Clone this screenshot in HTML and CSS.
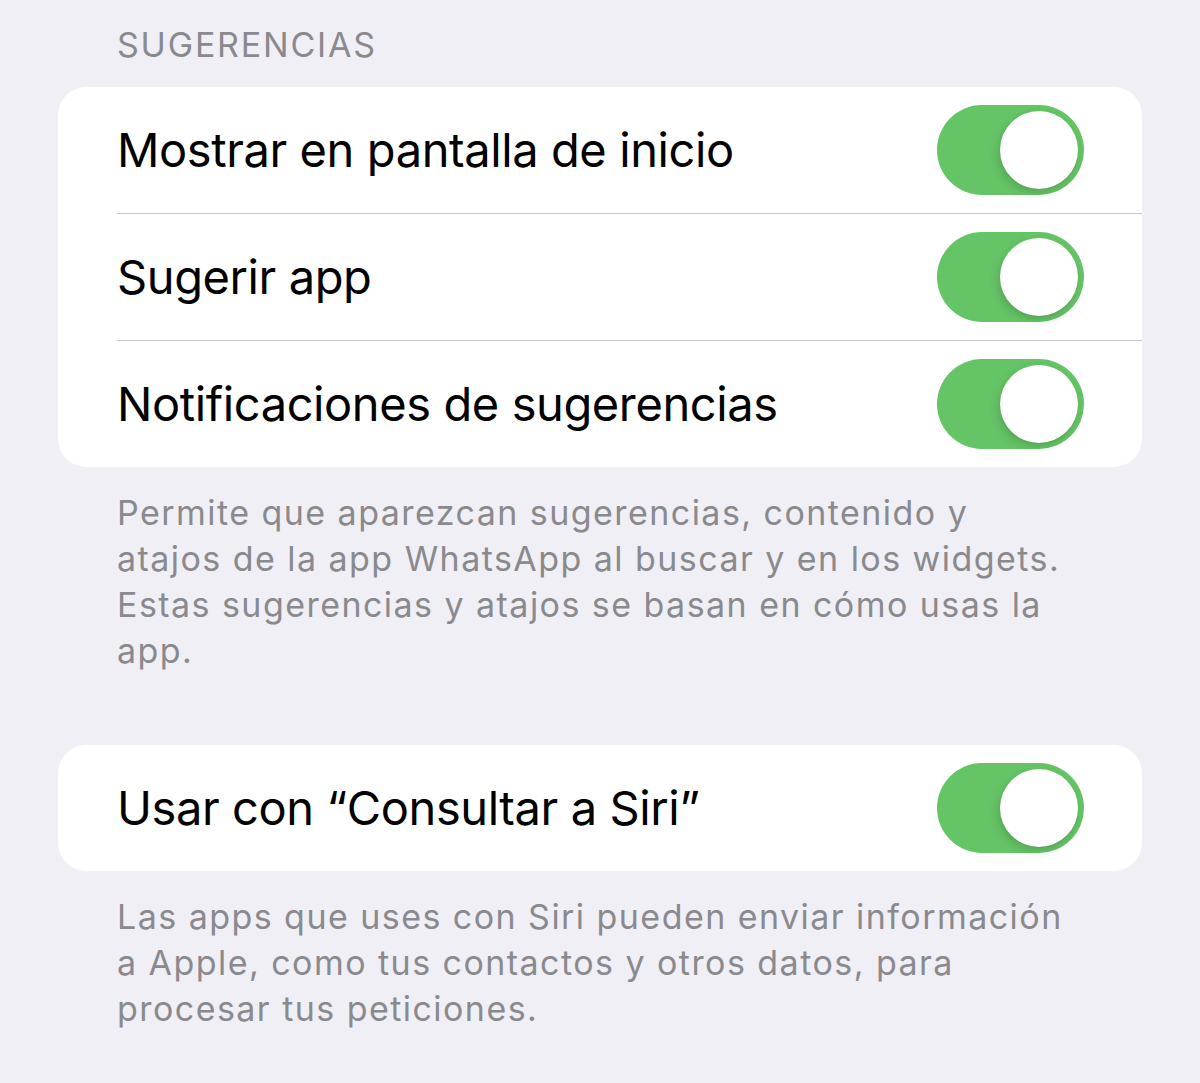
FILE: index.html
```html
<!DOCTYPE html>
<html lang="es">
<head>
<meta charset="utf-8">
<title>Sugerencias</title>
<link rel="stylesheet" href="styles.css">
</head>
<body>
<main class="page">
  <section class="group">
    <h2 class="group-header">SUGERENCIAS</h2>
    <div class="card">
      <div class="row">
        <div class="row-inner">
          <span class="label">Mostrar en pantalla de inicio</span>
          <span class="switch on"><span class="knob"></span></span>
        </div>
      </div>
      <div class="row">
        <div class="row-inner">
          <span class="label">Sugerir app</span>
          <span class="switch on"><span class="knob"></span></span>
        </div>
      </div>
      <div class="row">
        <div class="row-inner">
          <span class="label">Notificaciones de sugerencias</span>
          <span class="switch on"><span class="knob"></span></span>
        </div>
      </div>
    </div>
    <p class="group-footer">Permite que aparezcan sugerencias, contenido y atajos de la app WhatsApp al buscar y en los widgets. Estas sugerencias y atajos se basan en cómo usas la app.</p>
  </section>

  <section class="group group-siri">
    <div class="card">
      <div class="row">
        <div class="row-inner">
          <span class="label">Usar con “Consultar a Siri”</span>
          <span class="switch on"><span class="knob"></span></span>
        </div>
      </div>
    </div>
    <p class="group-footer">Las apps que uses con Siri pueden enviar información a Apple, como tus contactos y otros datos, para procesar tus peticiones.</p>
  </section>
</main>
</body>
</html>
```

FILE: styles.css
```css
html, body {
  margin: 0;
  padding: 0;
  background: #f0eff5;
}

body {
  font-family: Inter, "Noto Sans", "Liberation Sans", sans-serif;
  -webkit-font-smoothing: antialiased;
}

.page {
  padding: 0 58px;
  height: 1083px;
  box-sizing: border-box;
  overflow: hidden;
}

.group {
  display: flex;
  flex-direction: column;
}

.group-header {
  margin: 0;
  padding: 24px 0 0 59px;
  height: 87px;
  box-sizing: border-box;
  font-size: 34px;
  font-weight: 400;
  line-height: 42px;
  color: #8a8a8e;
  letter-spacing: 1.8px;
}

.card {
  background: #ffffff;
  border-radius: 28px;
  overflow: hidden;
}

.row {
  padding-left: 59px;
}

.row-inner {
  height: 127px;
  display: flex;
  align-items: center;
  justify-content: space-between;
  padding-right: 58px;
  border-bottom: 1.5px solid #c9c8cd;
  box-sizing: border-box;
}

.row:last-child .row-inner {
  border-bottom: none;
  height: 126px;
}

.label {
  font-size: 47px;
  color: #000000;
  letter-spacing: -0.4px;
  line-height: 56px;
}

.switch {
  width: 147px;
  height: 90px;
  border-radius: 45px;
  background: #65c466;
  display: flex;
  align-items: center;
  justify-content: flex-end;
  padding: 0 6px;
  box-sizing: border-box;
  flex-shrink: 0;
}

.knob {
  width: 78px;
  height: 78px;
  border-radius: 50%;
  background: #ffffff;
  box-shadow: -2px 4px 10px rgba(0, 0, 0, 0.14), 0 1px 2px rgba(0, 0, 0, 0.06);
}

.group-footer {
  margin: 0;
  padding: 23px 59px 0 59px;
  font-size: 34px;
  line-height: 46px;
  color: #8a8a8e;
  letter-spacing: 1.45px;
}

.group-siri {
  margin-top: 71px;
}
```
